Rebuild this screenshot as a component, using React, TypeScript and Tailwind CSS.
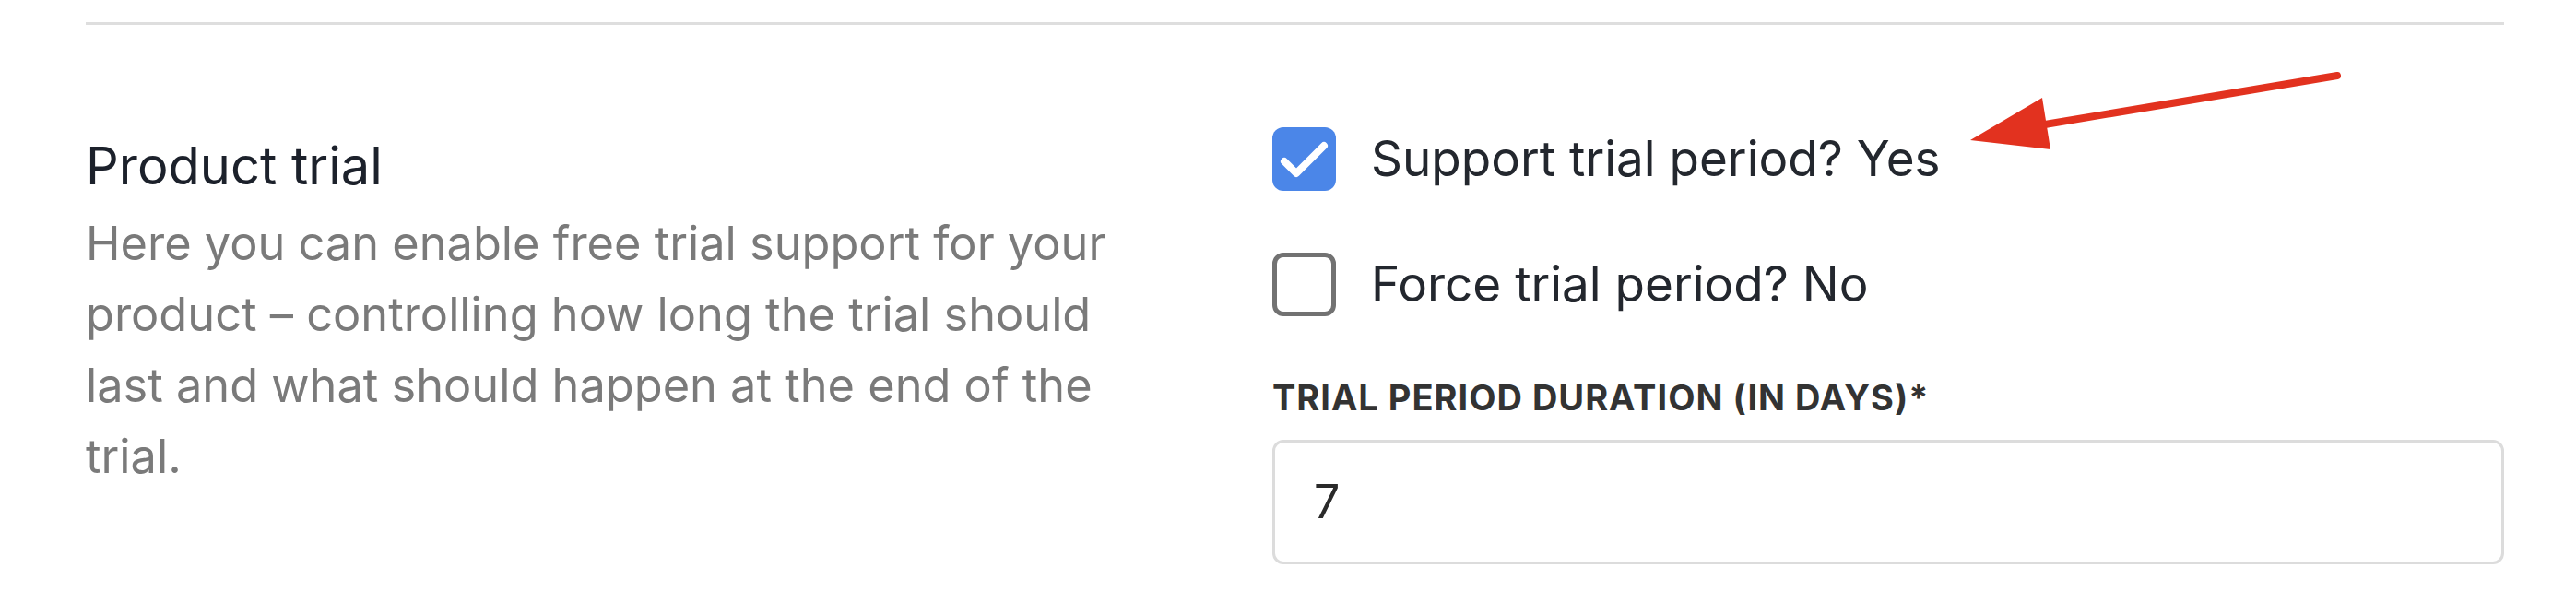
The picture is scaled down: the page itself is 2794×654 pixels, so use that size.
import { useState } from 'react';

function Checkbox({ checked }: { checked: boolean }) {
	if (checked) {
		return (
			<span className="w-[69px] h-[69px] shrink-0 rounded-[12px] bg-[#4b86e8] flex items-center justify-center">
				<svg viewBox="0 0 69 69" className="w-[69px] h-[69px]" aria-hidden="true">
					<polyline
						points="13,37 26,50 56,20"
						fill="none"
						stroke="#ffffff"
						strokeWidth="8"
						strokeLinecap="round"
						strokeLinejoin="round"
					/>
				</svg>
			</span>
		);
	}
	return (
		<span className="w-[69px] h-[69px] shrink-0 rounded-[12px] bg-white border-[5px] border-[#727272]" />
	);
}

function Toggle({ label, checked }: { label: string; checked: boolean }) {
	return (
		<label className="flex items-center gap-[38px] h-[69px]">
			<Checkbox checked={checked} />
			<span className="text-[53px] leading-[69px] text-[#23272e]">
				{label} {checked ? 'Yes' : 'No'}
			</span>
		</label>
	);
}

export default function App() {
	const [days] = useState('7');

	return (
		<div
			className="relative w-[2794px] h-[654px] bg-white overflow-hidden"
			style={{ fontFamily: 'Inter, "Noto Sans", sans-serif' }}
		>
			<div className="pl-[93px] pr-[78px] pt-[24px]">
				<div className="border-t-[3px] border-[#dedede]" />

				<div className="flex">
					<div className="w-[1287px] pt-[117px]">
						<h2 className="text-[56px] leading-[73px] text-[#1c212b]">Product trial</h2>
						<p className="mt-[8px] w-[1130px] text-[50.5px] leading-[77px] text-[#7a7a7a]">
							Here you can enable free trial support for your product – controlling how long
							the trial should last and what should happen at the end of the trial.
						</p>
					</div>

					<div className="flex-1 pt-[111px]">
						<div className="flex flex-col gap-[67px]">
							<Toggle label="Support trial period?" checked={true} />
							<Toggle label="Force trial period?" checked={false} />
						</div>

						<div className="mt-[66px] text-[38px] leading-[44px] font-bold tracking-[1px] text-[#333333] uppercase">
							Trial period duration (in days)*
						</div>

						<div className="mt-[24px] h-[135px] rounded-[12px] border-[3px] border-[#dcdcdc] flex items-center px-[42px]">
							<span className="text-[50px] text-[#2a2a2a]">{days}</span>
						</div>
					</div>
				</div>
			</div>

			{/* red annotation arrow */}
			<svg
				className="absolute left-[2120px] top-[60px] w-[440px] h-[120px]"
				viewBox="0 0 440 120"
				aria-hidden="true"
			>
				<line x1="415" y1="22" x2="92" y2="76" stroke="#e2321f" strokeWidth="8" strokeLinecap="round" />
				<polygon points="17,92 95,46 104,102" fill="#e2321f" />
			</svg>
		</div>
	);
}
